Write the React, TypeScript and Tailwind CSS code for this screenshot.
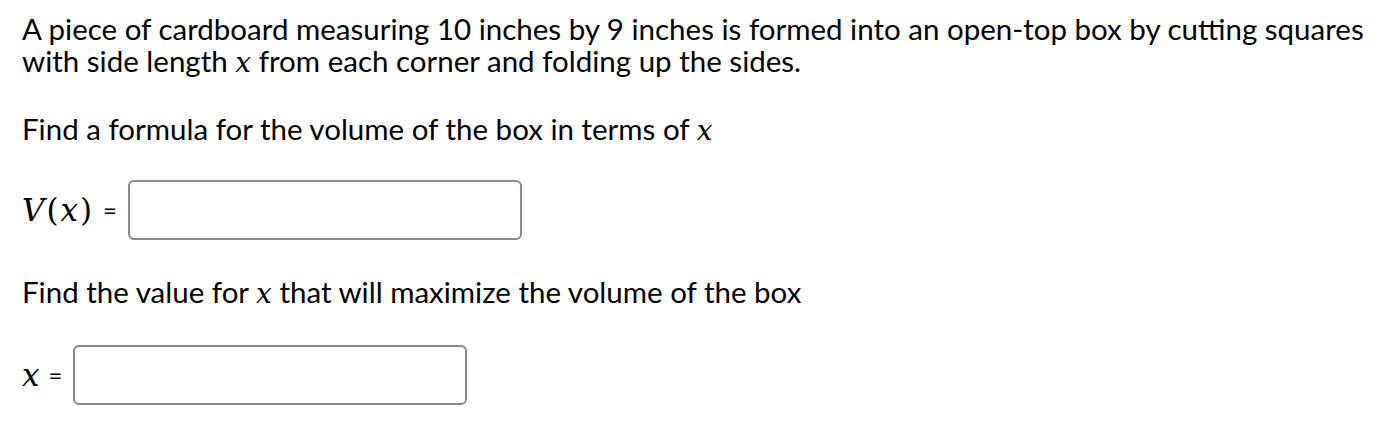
function M({ children, className = '' }: { children: React.ReactNode; className?: string }) {
  return <span className={`font-['DejaVu_Serif',serif] italic ${className}`}>{children}</span>
}

function AnswerBox() {
  return <input type="text" className="h-[60px] w-[394px] rounded-[6px] border-2 border-[#8a8a8a] bg-white outline-none" />
}

export default function App() {
  return (
    <div className="min-h-[422px] bg-white pl-[22px] pt-[13px] font-['Lato',sans-serif] text-[29.5px] leading-[32px] text-black">
      <p className="whitespace-nowrap">
        A piece of cardboard measuring 10 inches by 9 inches is formed into an open-top box by cutting squares
        <br />
        with side length <M className="text-[28px]">x</M> from each corner and folding up the sides.
      </p>

      <p className="mt-[34px]">
        Find a formula for the volume of the box in terms of <M className="text-[28px]">x</M>
      </p>

      <div className="mt-[33px] flex items-center">
        <M className="text-[31px] tracking-[2px]">
          V<span className="not-italic">(</span>x<span className="not-italic">)</span>
        </M>
        <span className="ml-[9px] mr-[11px] text-[24px]">=</span>
        <AnswerBox />
      </div>

      <p className="mt-[36px]">
        Find the value for <M className="text-[28px]">x</M> that will maximize the volume of the box
      </p>

      <div className="mt-[35px] flex items-center">
        <M className="text-[31px]">x</M>
        <span className="ml-[9px] mr-[11px] text-[24px]">=</span>
        <AnswerBox />
      </div>
    </div>
  )
}
